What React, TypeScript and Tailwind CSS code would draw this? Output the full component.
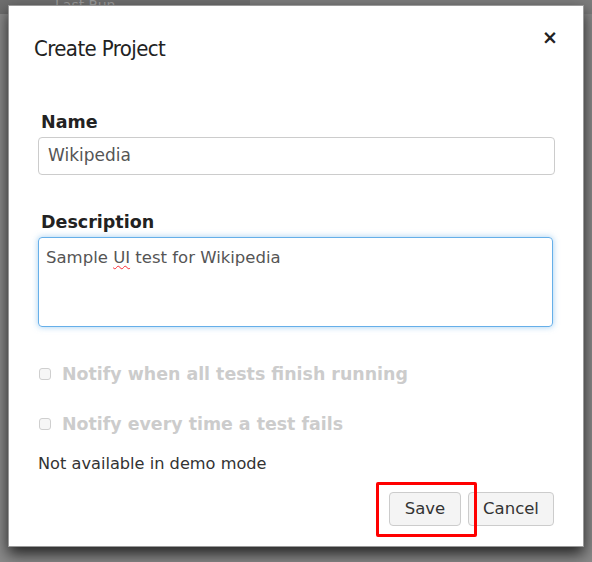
import React from 'react';

const body = { fontFamily: '"DejaVu Sans", Verdana, sans-serif' };

const App = () => {
  return (
    <div className="relative w-[592px] h-[562px] overflow-hidden bg-[#8a8a8a]" style={body}>
      {/* dimmed page behind the modal */}
      <div className="flex h-[14px] bg-[#7c7c7c]">
        <div className="w-[250px] bg-[#6e6e6e] text-[#9a9a9a] text-[14px] leading-[10px] pl-[55px]">Last Run</div>
        <div className="flex-1"></div>
      </div>

      {/* modal */}
      <div className="absolute left-[8px] top-[5px] w-[576px] h-[542px] bg-white border border-[#9a9a9a] shadow-[0_7px_14px_rgba(0,0,0,0.75)]">
        <div className="flex items-start justify-between pl-[25px] pr-[25px] pt-[27px]">
          <h1
            className="text-[22px] leading-[32px] text-[#222]"
            style={{ fontFamily: '"DejaVu Sans Condensed", "Liberation Sans Narrow", sans-serif', letterSpacing: '-0.6px' }}
          >
            Create Project
          </h1>
          <span className="text-[19px] font-bold leading-[19px] text-[#222] mt-[-5px]">×</span>
        </div>

        <div className="px-[29px] pt-[45px]">
          <label className="block pl-[3px] text-[17.5px] font-bold leading-[24px] text-[#222]">Name</label>
          <div className="mt-[3px] h-[38px] w-[517px] border border-[#cccccc] rounded-[4px] flex items-center px-[9px] text-[17px] text-[#555]">
            Wikipedia
          </div>

          <label className="block mt-[35px] pl-[3px] text-[17.5px] font-bold leading-[24px] text-[#222]">Description</label>
          <div className="mt-[3px] h-[90px] w-[515px] border border-[#66afe9] rounded-[4px] shadow-[0_0_6px_rgba(102,175,233,0.6)] px-[7px] pt-[8px] text-[16.5px] text-[#555] leading-[24px]">
            Sample <span className="underline decoration-wavy decoration-red-500 decoration-1 underline-offset-2">UI</span> test for Wikipedia
          </div>

          <div className="mt-[35px] flex items-center gap-[11px] pl-[1px] h-[24px]">
            <span className="w-[12px] h-[12px] border border-[#cfcfcf] rounded-[3px] bg-[#f6f6f6]"></span>
            <span className="text-[17.4px] font-bold text-[#cccccc] leading-[24px]">Notify when all tests finish running</span>
          </div>
          <div className="mt-[26px] flex items-center gap-[11px] pl-[1px] h-[24px]">
            <span className="w-[12px] h-[12px] border border-[#cfcfcf] rounded-[3px] bg-[#f6f6f6]"></span>
            <span className="text-[17.4px] font-bold text-[#cccccc] leading-[24px]">Notify every time a test fails</span>
          </div>

          <p className="mt-[17px] text-[16.2px] leading-[22px] text-[#333]">Not available in demo mode</p>

          <div className="mt-[17px] flex justify-end">
            <div className="relative flex gap-[7px] w-[165px]">
              <button className="h-[34px] w-[72px] bg-[#f4f4f4] border border-[#cccccc] rounded-[4px] text-[16.5px] text-[#333]">Save</button>
              <button className="h-[34px] w-[86px] bg-[#f4f4f4] border border-[#cccccc] rounded-[4px] text-[16.5px] text-[#333]">Cancel</button>
              <div className="absolute left-[-13px] top-[-10px] w-[101px] h-[55px] border-[3px] border-[#ff0000] rounded-[2px]"></div>
            </div>
          </div>
        </div>
      </div>
    </div>
  );
};

export default App;
